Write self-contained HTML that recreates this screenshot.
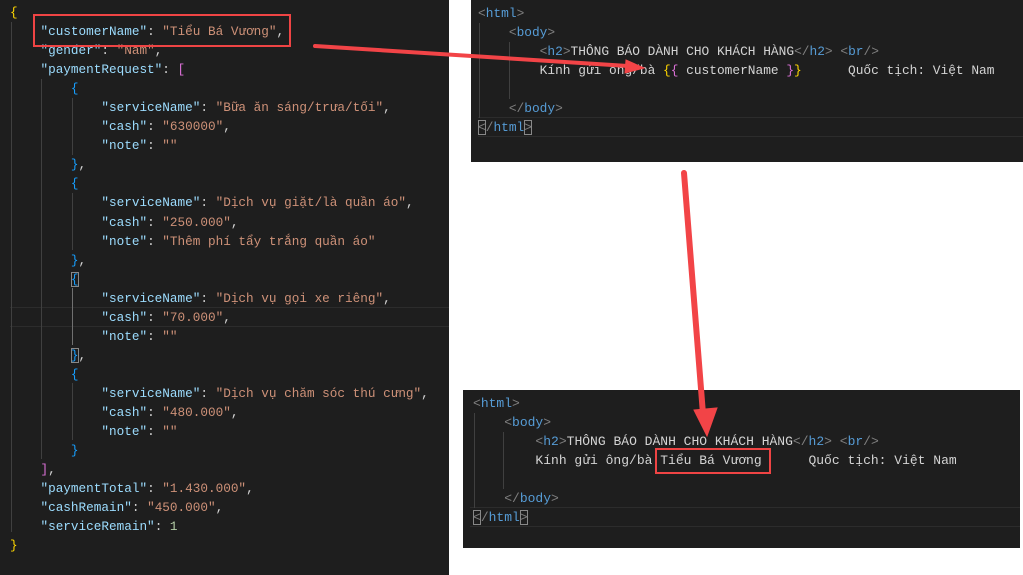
<!DOCTYPE html>
<html><head><meta charset="utf-8"><style>
body{margin:0;width:1023px;height:575px;background:#fff;position:relative;overflow:hidden;font-family:"Liberation Mono","DejaVu Sans Mono",monospace}
.p{position:absolute;background:#1e1e1e}
pre{margin:0;position:absolute;font-family:"Liberation Mono","DejaVu Sans Mono",monospace;font-size:12.7px;line-height:19.04px;color:#d4d4d4;white-space:pre}
.k{color:#9cdcfe}.s{color:#ce9178}.n{color:#b5cea8}.y{color:#ffd700}.m{color:#da70d6}.b{color:#179fff}.g{color:#808080}.t{color:#569cd6}
.gl{position:absolute;width:1px;background:#404040}
.box{position:absolute;border:2.5px solid #ef4444}
.bm{outline:1px solid #888;outline-offset:-1px}
</style></head><body>
<div class="p" style="left:0;top:0;width:449px;height:575px"></div>
<div style="position:absolute;left:10px;top:307px;width:439px;height:18px;border-top:1px solid #2c2c2c;border-bottom:1px solid #2c2c2c"></div>
<div class="gl" style="left:11px;top:22px;height:510px"></div>
<div class="gl" style="left:41px;top:79px;height:380px"></div>
<div class="gl" style="left:72px;top:98px;height:57px"></div>
<div class="gl" style="left:72px;top:193px;height:57px"></div>
<div class="gl" style="left:72px;top:288px;height:57px;background:#707070"></div>
<div class="gl" style="left:72px;top:383px;height:57px"></div>
<pre style="left:10px;top:3px"><span class="y">{</span>
    <span class="k">"customerName"</span>: <span class="s">"Tiểu Bá Vương"</span>,
    <span class="k">"gender"</span>: <span class="s">"Nam"</span>,
    <span class="k">"paymentRequest"</span>: <span class="m">[</span>
        <span class="b">{</span>
            <span class="k">"serviceName"</span>: <span class="s">"Bữa ăn sáng/trưa/tối"</span>,
            <span class="k">"cash"</span>: <span class="s">"630000"</span>,
            <span class="k">"note"</span>: <span class="s">""</span>
        <span class="b">}</span>,
        <span class="b">{</span>
            <span class="k">"serviceName"</span>: <span class="s">"Dịch vụ giặt/là quần áo"</span>,
            <span class="k">"cash"</span>: <span class="s">"250.000"</span>,
            <span class="k">"note"</span>: <span class="s">"Thêm phí tẩy trắng quần áo"</span>
        <span class="b">}</span>,
        <span class="b bm">{</span>
            <span class="k">"serviceName"</span>: <span class="s">"Dịch vụ gọi xe riêng"</span>,
            <span class="k">"cash"</span>: <span class="s">"70.000"</span>,
            <span class="k">"note"</span>: <span class="s">""</span>
        <span class="b bm">}</span>,
        <span class="b">{</span>
            <span class="k">"serviceName"</span>: <span class="s">"Dịch vụ chăm sóc thú cưng"</span>,
            <span class="k">"cash"</span>: <span class="s">"480.000"</span>,
            <span class="k">"note"</span>: <span class="s">""</span>
        <span class="b">}</span>
    <span class="m">]</span>,
    <span class="k">"paymentTotal"</span>: <span class="s">"1.430.000"</span>,
    <span class="k">"cashRemain"</span>: <span class="s">"450.000"</span>,
    <span class="k">"serviceRemain"</span>: <span class="n">1</span>
<span class="y">}</span></pre>
<div class="box" style="left:33px;top:14px;width:254px;height:29px"></div>

<div class="p" style="left:471px;top:0;width:552px;height:162px"></div>
<div style="position:absolute;left:478px;top:117px;width:545px;height:18px;border-top:1px solid #2c2c2c;border-bottom:1px solid #2c2c2c"></div>
<div class="gl" style="left:479px;top:23px;height:95px"></div>
<div class="gl" style="left:509px;top:42px;height:57px"></div>
<pre style="left:478px;top:4px;font-size:12.85px"><span class="g">&lt;</span><span class="t">html</span><span class="g">&gt;</span>
    <span class="g">&lt;</span><span class="t">body</span><span class="g">&gt;</span>
        <span class="g">&lt;</span><span class="t">h2</span><span class="g">&gt;</span>THÔNG BÁO DÀNH CHO KHÁCH HÀNG<span class="g">&lt;/</span><span class="t">h2</span><span class="g">&gt;</span> <span class="g">&lt;</span><span class="t">br</span><span class="g">/&gt;</span>
        Kính gửi ông/bà <span class="y">{</span><span class="m">{</span> customerName <span class="m">}</span><span class="y">}</span>      Quốc tịch: Việt Nam

    <span class="g">&lt;/</span><span class="t">body</span><span class="g">&gt;</span>
<span class="g bm">&lt;</span><span class="g">/</span><span class="t">html</span><span class="g bm">&gt;</span></pre>

<div class="p" style="left:463px;top:390px;width:557px;height:158px"></div>
<div style="position:absolute;left:470px;top:507px;width:550px;height:18px;border-top:1px solid #2c2c2c;border-bottom:1px solid #2c2c2c"></div>
<div class="gl" style="left:474px;top:413px;height:95px"></div>
<div class="gl" style="left:503px;top:432px;height:57px"></div>
<pre style="left:473px;top:394px;font-size:13px"><span class="g">&lt;</span><span class="t">html</span><span class="g">&gt;</span>
    <span class="g">&lt;</span><span class="t">body</span><span class="g">&gt;</span>
        <span class="g">&lt;</span><span class="t">h2</span><span class="g">&gt;</span>THÔNG BÁO DÀNH CHO KHÁCH HÀNG<span class="g">&lt;/</span><span class="t">h2</span><span class="g">&gt;</span> <span class="g">&lt;</span><span class="t">br</span><span class="g">/&gt;</span>
        Kính gửi ông/bà Tiểu Bá Vương      Quốc tịch: Việt Nam

    <span class="g">&lt;/</span><span class="t">body</span><span class="g">&gt;</span>
<span class="g bm">&lt;</span><span class="g">/</span><span class="t">html</span><span class="g bm">&gt;</span></pre>
<div class="box" style="left:655px;top:448px;width:112px;height:22px"></div>

<svg style="position:absolute;left:0;top:0" width="1023" height="575">
<g fill="#f24447" stroke="#f24447" stroke-linecap="round">
<line x1="315" y1="46" x2="628" y2="66" stroke-width="4"/>
<polygon points="644,68 626,60 625,73" stroke-width="1"/>
<line x1="684" y1="173" x2="703" y2="414" stroke-width="6"/>
<polygon points="694,410 717,408 707,436" stroke-width="1"/>
</g></svg>
</body></html>
